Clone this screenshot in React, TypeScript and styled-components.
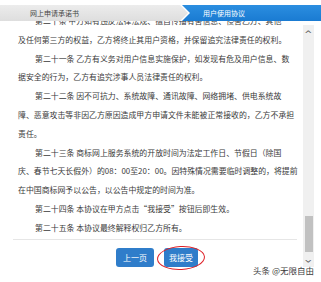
import * as React from 'react'
import styled, { createGlobalStyle } from 'styled-components'

const GlobalStyle = createGlobalStyle`
  html, body {
    margin: 0;
    padding: 0;
    background: #fff;
  }
  body {
    width: 321px;
    height: 282px;
    overflow: hidden;
    font-family: "Noto Sans CJK SC", "Noto Sans", sans-serif;
  }
`

const Page = styled.div`
  position: relative;
  width: 321px;
  height: 282px;
  overflow: hidden;
  background: #fff;
`

const TabBar = styled.div`
  display: flex;
  height: 16px;
  margin-top: 5px;
`

const Tab = styled.div<{ $active?: boolean; $width: number }>`
  flex: 0 0 ${p => p.$width}px;
  display: flex;
  align-items: center;
  padding-left: ${p => (p.$active ? 21 : 30)}px;
  font-size: 7px;
  color: ${p => (p.$active ? '#fff' : '#444')};
  background: ${p =>
    p.$active
      ? 'linear-gradient(#2b8ee0, #1a7bd2)'
      : 'linear-gradient(#ececec, #dedede)'};
  clip-path: ${p =>
    p.$active
      ? 'polygon(0 0, calc(100% - 9px) 0, 100% 50%, calc(100% - 9px) 100%, 0 100%, 8px 50%)'
      : 'polygon(0 0, calc(100% - 8px) 0, 100% 50%, calc(100% - 8px) 100%, 0 100%)'};
  margin-left: ${p => (p.$active ? -6 : 0)}px;
`

const Main = styled.div`
  display: flex;
`

const Content = styled.div`
  width: 303px;
  display: flex;
  flex-direction: column;
`

const TextViewport = styled.div`
  height: 216px;
  overflow: hidden;
`

const TextBlock = styled.div`
  margin-top: -9px;
  padding-left: 18px;
  font-size: 7.9px;
  line-height: 18.8px;
  color: #3a3a3a;
  white-space: nowrap;
`

const Line = styled.div<{ $indent?: boolean }>`
  padding-left: ${p => (p.$indent ? 17 : 0)}px;
`

const Divider = styled.div`
  height: 1px;
  width: 284px;
  margin: 2px 0 0 13px;
  background: #e6e6e6;
`

const ButtonRow = styled.div`
  display: flex;
  justify-content: center;
  gap: 10px;
  margin-top: 8px;
  padding-left: 11px;
`

const Button = styled.button<{ $width: number }>`
  position: relative;
  width: ${p => p.$width}px;
  height: 19px;
  padding: 0;
  border: none;
  border-radius: 3px;
  background: #2f7dca;
  color: #fff;
  font-family: inherit;
  font-size: 8px;
`

const Circle = styled.span`
  position: absolute;
  left: -7px;
  top: -2px;
  width: 46px;
  height: 22px;
  border: 1.5px solid #de1f26;
  border-radius: 50%;
  transform: rotate(-3deg);
  pointer-events: none;
`

const ScrollBar = styled.div`
  width: 11px;
  height: 242px;
  margin-top: 4px;
  background: #f0f0f0;
  display: flex;
  flex-direction: column;
  align-items: center;
`

const ScrollArrow = styled.div`
  font-size: 8px;
  line-height: 10px;
  height: 10px;
  margin-top: 5px;
  color: #555;
  font-family: "DejaVu Sans", sans-serif;
  transform: scaleX(1.2);
`

const Thumb = styled.div`
  width: 8px;
  height: 36px;
  margin-top: auto;
  background: #c1c1c1;
`

const DownArrow = styled(ScrollArrow)`
  margin: 1px 0 4px;
  transform: scaleX(1.2) rotate(180deg);
`

const Watermark = styled.div`
  position: absolute;
  right: 7px;
  bottom: 6px;
  font-size: 8.5px;
  color: #3c3c3c;
  text-shadow: 0 0 2px #fff, 0 0 2px #fff;
  white-space: nowrap;
`

const lines: { text: string; indent?: boolean }[] = [
  { text: '第二十条 甲方如有违反法律法规、擅自传播有害信息、侵害乙方、其他', indent: true },
  { text: '及任何第三方的权益，乙方将终止其用户资格，并保留追究法律责任的权利。' },
  { text: '第二十一条 乙方有义务对用户信息实施保护，如发现有危及用户信息、数', indent: true },
  { text: '据安全的行为，乙方有追究涉事人员法律责任的权利。' },
  { text: '第二十二条 因不可抗力、系统故障、通讯故障、网络拥堵、供电系统故', indent: true },
  { text: '障、恶意攻击等非因乙方原因造成甲方申请文件未能被正常接收的，乙方不承担' },
  { text: '责任。' },
  { text: '第二十三条 商标网上服务系统的开放时间为法定工作日、节假日（除国', indent: true },
  { text: '庆、春节七天长假外）的08：00至20：00。因特殊情况需要临时调整的，将提前' },
  { text: '在中国商标网予以公告，以公告中规定的时间为准。' },
  { text: '第二十四条 本协议在甲方点击“我接受”按钮后即生效。', indent: true },
  { text: '第二十五条 本协议最终解释权归乙方所有。', indent: true },
]

export default function App() {
  return (
    <>
      <GlobalStyle />
      <Page>
        <TabBar>
          <Tab $width={158}>网上申请承诺书</Tab>
          <Tab $width={151} $active>用户使用协议</Tab>
        </TabBar>
        <Main>
          <Content>
            <TextViewport>
              <TextBlock>
                {lines.map((l, i) => (
                  <Line key={i} $indent={l.indent}>{l.text}</Line>
                ))}
              </TextBlock>
            </TextViewport>
            <Divider />
            <ButtonRow>
              <Button $width={38}>上一页</Button>
              <Button $width={34}>
                我接受
                <Circle />
              </Button>
            </ButtonRow>
          </Content>
          <ScrollBar>
            <ScrollArrow>^</ScrollArrow>
            <Thumb />
            <DownArrow>^</DownArrow>
          </ScrollBar>
        </Main>
        <Watermark>头条 @无限自由</Watermark>
      </Page>
    </>
  )
}
